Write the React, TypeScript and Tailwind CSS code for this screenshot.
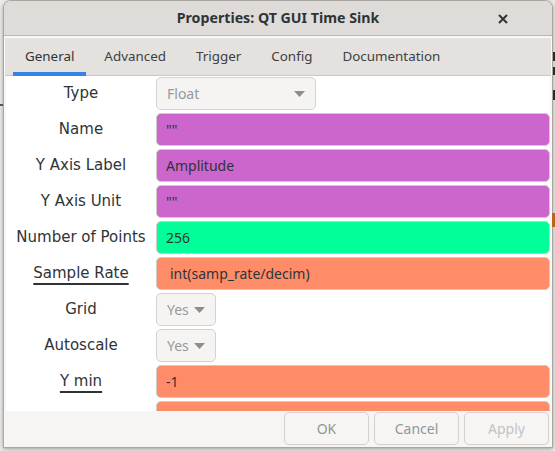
import React from "react";

const tabs = ["General", "Advanced", "Trigger", "Config", "Documentation"];

type Row = {
  label: string;
  kind: "text" | "select";
  value: string;
  color?: string;
  underline?: boolean;
  width?: string;
  indent?: boolean;
};

// the last row is only partly visible, scrolled under the button bar
const rows: Row[] = [
  { label: "Type", kind: "select", value: "Float", width: "w-[160px]" },
  { label: "Name", kind: "text", value: '""', color: "bg-[#cc66cc]" },
  { label: "Y Axis Label", kind: "text", value: "Amplitude", color: "bg-[#cc66cc]" },
  { label: "Y Axis Unit", kind: "text", value: '""', color: "bg-[#cc66cc]" },
  { label: "Number of Points", kind: "text", value: "256", color: "bg-[#00ff99]" },
  { label: "Sample Rate", kind: "text", value: "int(samp_rate/decim)", color: "bg-[#ff8c69]", underline: true, indent: true },
  { label: "Grid", kind: "select", value: "Yes", width: "w-[60px]" },
  { label: "Autoscale", kind: "select", value: "Yes", width: "w-[60px]" },
  { label: "Y min", kind: "text", value: "-1", color: "bg-[#ff8c69]", underline: true },
  { label: "", kind: "text", value: "", color: "bg-[#ff8c69]" },
];

function Arrow() {
  return (
    <svg width="11" height="6" viewBox="0 0 11 6" className="shrink-0">
      <path d="M0 0 L11 0 L5.5 6 Z" fill="#8b8e8f" />
    </svg>
  );
}

export default function App() {
  return (
    <div className="relative w-[555px] h-[451px] overflow-hidden bg-[#efedeb] font-['Noto_Sans',sans-serif]">
      {/* bits of the window behind */}
      <div className="absolute left-0 top-[104px] w-[3px] h-[2px] bg-[#555]" />
      <div className="absolute left-[553px] top-[52px] w-[2px] h-[9px] bg-[#2b2b2b]" />
      <div className="absolute left-[553px] top-[67px] w-[2px] h-[8px] bg-[#2b2b2b]" />
      <div className="absolute left-[553px] top-[90px] w-[2px] h-[10px] bg-[#2b2b2b]" />
      <div className="absolute left-[552px] top-[213px] w-[3px] h-[14px] bg-[#b8681a]" />

      <div className="ml-[3px] w-[550px] h-[448px] flex flex-col rounded-t-[8px] border border-[#a9a5a1] bg-[#f6f5f4] shadow-[0_1px_4px_rgba(0,0,0,0.35)] overflow-hidden">
        {/* title bar */}
        <div className="relative h-[35px] shrink-0 flex items-center justify-center bg-[#dfdbd8] border-b border-[#bfb8b1]">
          <span className="text-[14.2px] font-bold text-[#2e3436]">Properties: QT GUI Time Sink</span>
          <svg width="10" height="10" viewBox="0 0 10 10" className="absolute left-[494px] top-[13px]">
            <path d="M1 1 L9 9 M9 1 L1 9" stroke="#2e3436" strokeWidth="2" />
          </svg>
        </div>

        <div className="flex-1 min-h-0 flex flex-col mt-[1px] border-x border-t border-[#fbfaf9]">
          {/* tabs */}
          <div className="h-[38px] shrink-0 flex items-stretch pl-[8px] bg-[#e4e1de] border-b border-[#cdc7c2]">
            {tabs.map((t, i) => (
              <div
                key={t}
                className={
                  "relative flex items-center px-[12px] mr-[6px] text-[13.4px] " +
                  (i === 0 ? "text-[#2e3436]" : "text-[#3d4244]")
                }
              >
                {t}
                {i === 0 && <div className="absolute left-0 right-0 bottom-[-1px] h-[4px] bg-[#3584e4]" />}
              </div>
            ))}
          </div>

          {/* form */}
          <div className="flex-1 min-h-0 overflow-hidden bg-white ml-[1px] mr-[1px] pt-[1px] flex flex-col gap-[3px]">
            {rows.map((r, i) => (
              <div key={i} className="flex items-center h-[33px] shrink-0">
                <div className="w-[150px] shrink-0 text-center text-[15px] text-[#2e3436] font-['DejaVu_Sans',sans-serif]">
                  <span className={r.underline ? "underline underline-offset-[5px] decoration-[1.5px]" : ""}>{r.label}</span>
                </div>
                {r.kind === "text" ? (
                  <div
                    className={
                      "flex-1 h-full flex items-center rounded-[5px] border border-[#d0cbc6] text-[14px] text-[#2e3436] " +
                      (r.indent ? "pl-[13px] " : "pl-[9px] ") +
                      r.color
                    }
                  >
                    {r.value}
                  </div>
                ) : (
                  <div
                    className={
                      "h-full flex items-center justify-between pl-[10px] pr-[10px] rounded-[5px] border border-[#d6d1cc] bg-[#f5f4f2] text-[14px] text-[#97999b] " +
                      r.width
                    }
                  >
                    <span>{r.value}</span>
                    <Arrow />
                  </div>
                )}
              </div>
            ))}
          </div>

          {/* buttons */}
          <div className="h-[36px] shrink-0 flex justify-end items-start gap-[5px] pr-[2px] pt-[1px] bg-[#f6f5f4]">
            <button className="w-[85px] h-[33px] rounded-[5px] border border-[#d5d0cc] bg-[#f6f5f4] text-[14px] text-[#929595]">OK</button>
            <button className="w-[85px] h-[33px] rounded-[5px] border border-[#d5d0cc] bg-[#f6f5f4] text-[14px] text-[#929595]">Cancel</button>
            <button className="w-[85px] h-[33px] rounded-[5px] border border-[#d5d0cc] bg-[#f6f5f4] text-[14px] text-[#c2c3c3]">Apply</button>
          </div>
        </div>
      </div>
    </div>
  );
}
